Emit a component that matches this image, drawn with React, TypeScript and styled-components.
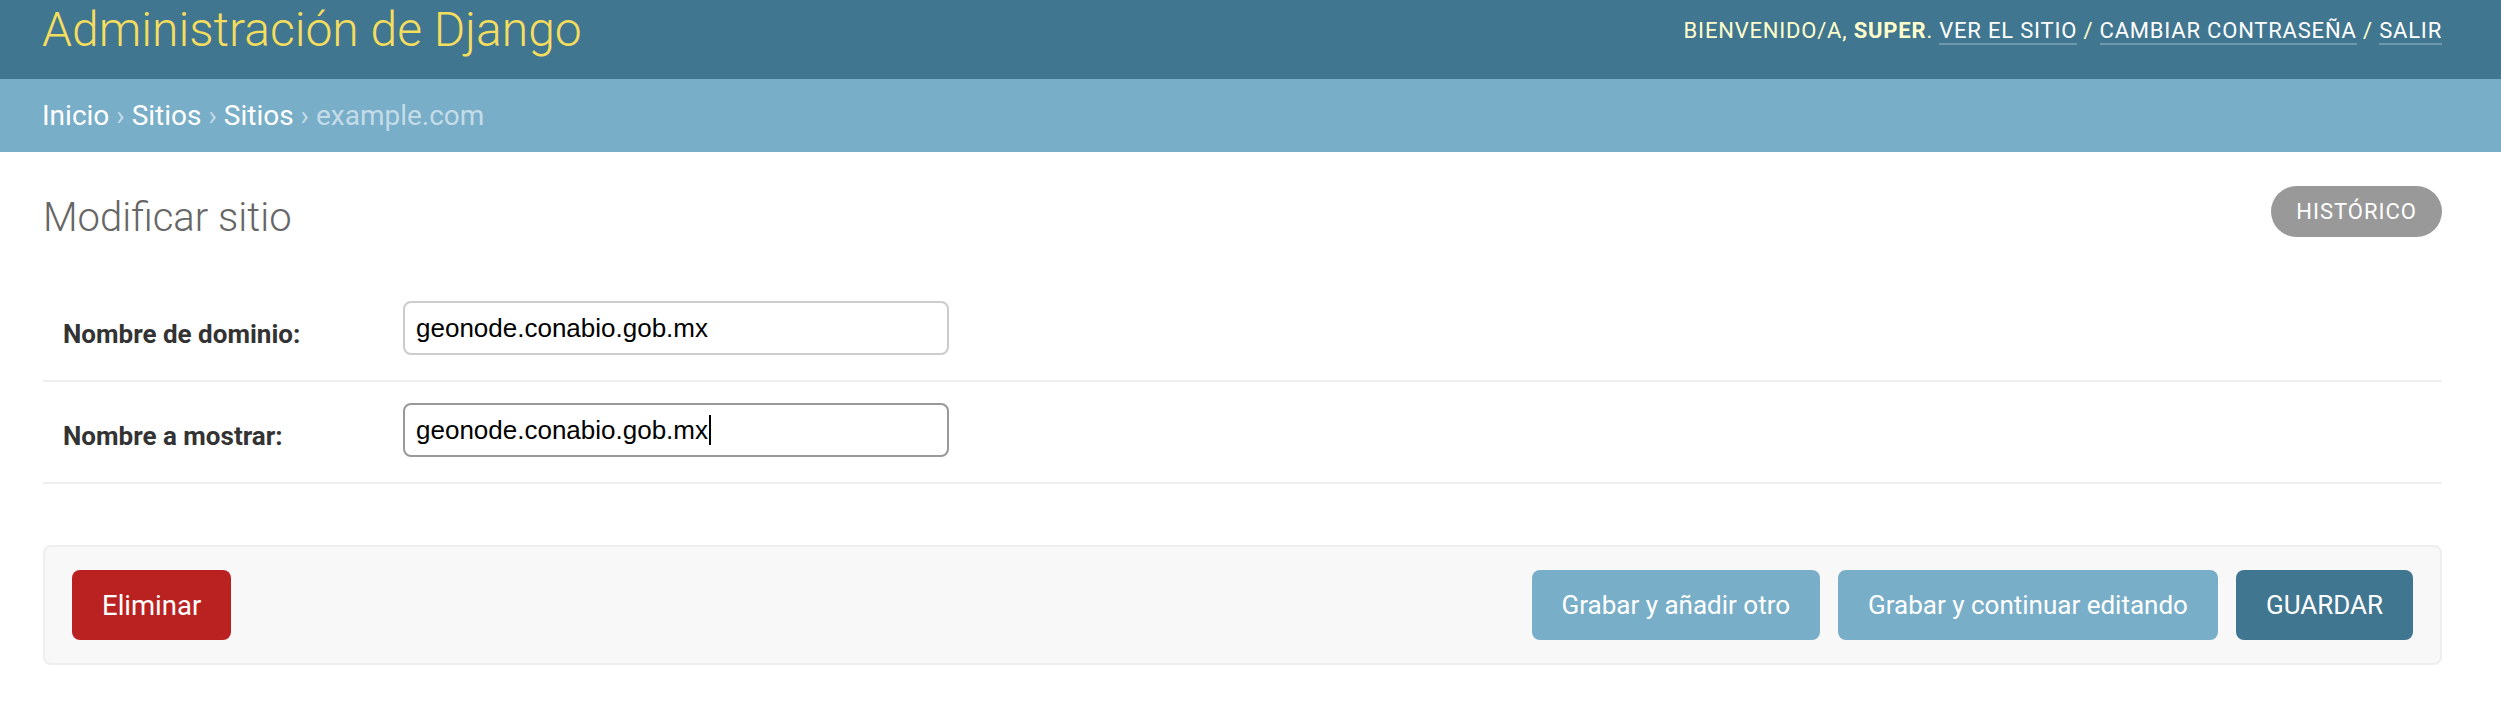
import styled, { createGlobalStyle } from "styled-components";

const GlobalStyle = createGlobalStyle`
  html, body {
    margin: 0;
    padding: 0;
    background: #fff;
    font-family: Roboto, "Liberation Sans", Arial, sans-serif;
    color: #333;
  }
`;

const Header = styled.header`
  display: flex;
  justify-content: space-between;
  align-items: flex-start;
  height: 79px;
  padding: 0 59px 0 42px;
  background: #417690;
  box-sizing: border-box;
`;

const Branding = styled.h1`
  margin: 0;
  font-size: 48px;
  font-weight: 300;
  line-height: 60px;
  color: #f5dd5d;
`;

const UserTools = styled.div`
  padding-top: 16px;
  font-size: 22px;
  line-height: 30px;
  letter-spacing: 0.8px;
  text-transform: uppercase;
  color: #ffc;
`;

const ToolLink = styled.a`
  color: #fff;
  text-decoration: none;
  border-bottom: 2px solid rgba(255, 255, 255, 0.25);
`;

const Breadcrumbs = styled.nav`
  background: #79aec8;
  padding: 20px 42px;
  font-size: 28px;
  line-height: 33px;
  color: #c4dce8;
`;

const Crumb = styled.a`
  color: #fff;
  text-decoration: none;
`;

const Content = styled.main`
  padding: 34px 59px 40px 43px;
`;

const TitleBar = styled.div`
  display: flex;
  justify-content: space-between;
  align-items: flex-start;
`;

const PageTitle = styled.h1`
  margin: 6px 0 0;
  font-size: 40px;
  font-weight: 300;
  line-height: 51px;
  color: #666;
`;

const HistoryButton = styled.a`
  display: block;
  height: 51px;
  padding: 0 25px;
  border-radius: 26px;
  background: #999;
  color: #fff;
  font-size: 22px;
  line-height: 51px;
  letter-spacing: 1px;
  text-transform: uppercase;
  text-decoration: none;
`;

const Fieldset = styled.fieldset`
  margin: 37px 0 0;
  padding: 0;
  border: none;
`;

const FormRow = styled.div`
  display: flex;
  align-items: flex-start;
  padding: 21px 20px 25px;
  border-bottom: 2px solid #eee;
`;

const Label = styled.label`
  width: 320px;
  padding: 18px 20px 0 0;
  font-size: 26px;
  font-weight: 700;
  line-height: 30px;
  color: #333;
`;

const TextBox = styled.div<{ $focused?: boolean }>`
  box-sizing: border-box;
  width: 546px;
  height: 54px;
  padding: 0 11px;
  border: 2px solid ${(p) => (p.$focused ? "#999" : "#ccc")};
  border-radius: 8px;
  background: #fff;
  font-family: "Liberation Sans", Arial, sans-serif;
  font-size: 26px;
  line-height: 50px;
  color: #000;
  white-space: nowrap;
`;

const Caret = styled.span`
  display: inline-block;
  width: 2px;
  height: 30px;
  margin-left: 1px;
  vertical-align: -6px;
  background: #000;
`;

const SubmitRow = styled.div`
  display: flex;
  align-items: center;
  gap: 18px;
  margin-top: 61px;
  padding: 23px 27px;
  background: #f8f8f8;
  border: 2px solid #eee;
  border-radius: 8px;
`;

const Spacer = styled.div`
  flex: 1;
`;

const Button = styled.button<{ $variant: "delete" | "secondary" | "default" }>`
  height: 70px;
  padding: 0 30px;
  border: none;
  border-radius: 8px;
  font-family: Roboto, "Liberation Sans", Arial, sans-serif;
  font-size: ${(p) => (p.$variant === "delete" ? "27.5px" : "26px")};
  color: #fff;
  cursor: pointer;
  background: ${(p) =>
    p.$variant === "delete" ? "#ba2121" : p.$variant === "default" ? "#417690" : "#79aec8"};
`;

export default function App() {
  return (
    <>
      <GlobalStyle />
      <Header>
        <Branding>Administración de Django</Branding>
        <UserTools>
          Bienvenido/a, <strong>super</strong>. <ToolLink href="#">Ver el sitio</ToolLink> /{" "}
          <ToolLink href="#">Cambiar contraseña</ToolLink> / <ToolLink href="#">Salir</ToolLink>
        </UserTools>
      </Header>
      <Breadcrumbs>
        <Crumb href="#">Inicio</Crumb> › <Crumb href="#">Sitios</Crumb> › <Crumb href="#">Sitios</Crumb> ›
        example.com
      </Breadcrumbs>
      <Content>
        <TitleBar>
          <PageTitle>Modificar sitio</PageTitle>
          <HistoryButton href="#">Histórico</HistoryButton>
        </TitleBar>
        <Fieldset>
          <FormRow>
            <Label>Nombre de dominio:</Label>
            <TextBox>geonode.conabio.gob.mx</TextBox>
          </FormRow>
          <FormRow>
            <Label>Nombre a mostrar:</Label>
            <TextBox $focused>
              geonode.conabio.gob.mx
              <Caret />
            </TextBox>
          </FormRow>
        </Fieldset>
        <SubmitRow>
          <Button $variant="delete">Eliminar</Button>
          <Spacer />
          <Button $variant="secondary">Grabar y añadir otro</Button>
          <Button $variant="secondary">Grabar y continuar editando</Button>
          <Button $variant="default">GUARDAR</Button>
        </SubmitRow>
      </Content>
    </>
  );
}
